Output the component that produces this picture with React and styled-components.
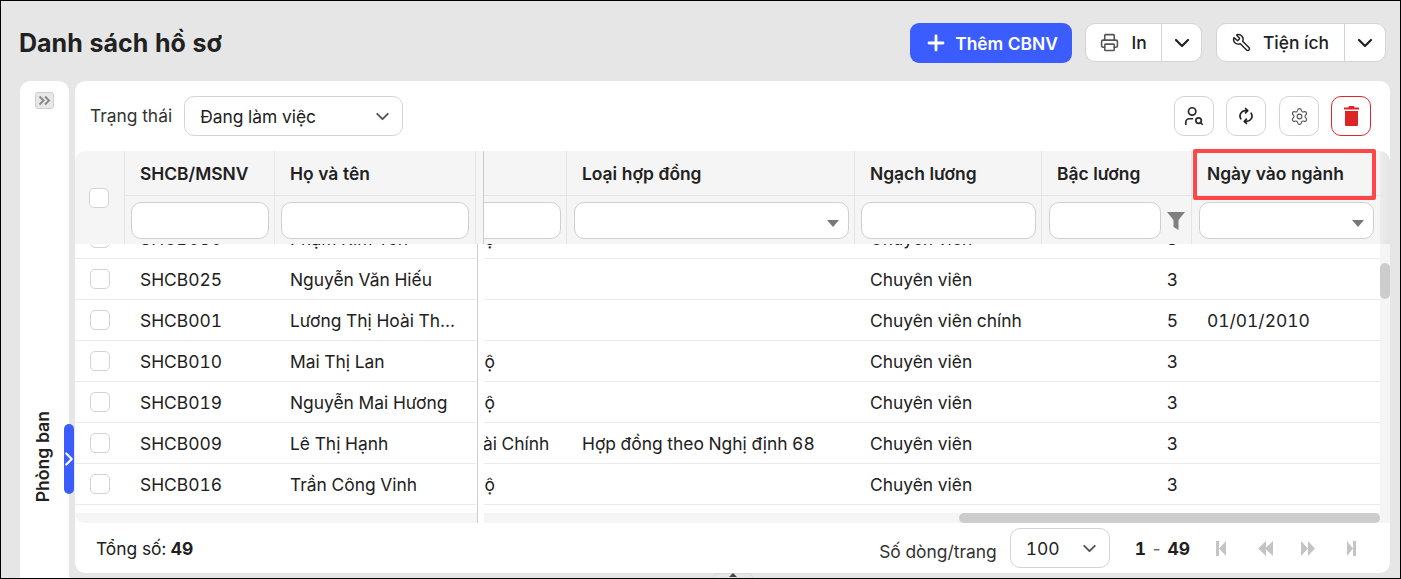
import styled, { createGlobalStyle } from "styled-components";
import { ChevronDown, ChevronRight, Plus, Printer, Settings, UserSearch, Wrench } from "lucide-react";

const GlobalStyle = createGlobalStyle`
  html, body { margin: 0; padding: 0; background: #e6e6e6; }
  * { box-sizing: border-box; }
`;

const COLS = { check: 50, code: 150, name: 201, gap: 8, dept: 83, contract: 288, grade: 187, level: 150, date: 188 };

const rows = [
  { code: "SHCB030", name: "Phạm Kim Yến", dept: "Bộ", grade: "Chuyên viên", level: 3 },
  { code: "SHCB025", name: "Nguyễn Văn Hiếu", grade: "Chuyên viên", level: 3 },
  { code: "SHCB001", name: "Lương Thị Hoài Thương", grade: "Chuyên viên chính", level: 5, date: "01/01/2010" },
  { code: "SHCB010", name: "Mai Thị Lan", dept: "Bộ", grade: "Chuyên viên", level: 3 },
  { code: "SHCB019", name: "Nguyễn Mai Hương", dept: "Bộ", grade: "Chuyên viên", level: 3 },
  { code: "SHCB009", name: "Lê Thị Hạnh", dept: "Tài Chính", contract: "Hợp đồng theo Nghị định 68", grade: "Chuyên viên", level: 3 },
  { code: "SHCB016", name: "Trần Công Vinh", dept: "Bộ", grade: "Chuyên viên", level: 3 },
];

const Page = styled.div`
  position: relative;
  width: 1401px;
  height: 579px;
  border: 1px solid #000;
  background: #e6e6e6;
  overflow: hidden;
  font-family: Inter, "Noto Sans", sans-serif;
  font-size: 17.4px;
  font-variant-numeric: tabular-nums;
  color: #212121;
`;
const TopBar = styled.header`
  display: flex;
  align-items: center;
  justify-content: space-between;
  height: 40px;
  margin: 22px 14px 18px 18px;
`;
const Title = styled.h1`
  margin: 0;
  font-size: 25px;
  font-weight: 700;
`;
const Actions = styled.div`
  display: flex;
  gap: 13px;
  & > :last-child { margin-left: 1px; }
`;
const PrimaryButton = styled.button`
  display: flex;
  align-items: center;
  justify-content: center;
  gap: 7px;
  width: 162px;
  height: 40px;
  border: 0;
  border-radius: 9px;
  background: #3b5cff;
  color: #fff;
  font: 600 17.4px Inter, sans-serif;
`;
const SplitButton = styled.div`
  display: flex;
  height: 39px;
  border: 1px solid #d4d4d4;
  border-radius: 10px;
  background: #fff;
  font-weight: 500;
`;
const SplitMain = styled.div`
  display: flex;
  align-items: center;
  justify-content: center;
  gap: 12px;
  width: ${(p) => p.$width}px;
  border-right: 1px solid #d4d4d4;
`;
const SplitArrow = styled.div`
  display: flex;
  align-items: center;
  justify-content: center;
  width: ${(p) => p.$width}px;
`;
const MirroredWrench = styled(Wrench)`
  transform: scaleX(-1);
`;
const Content = styled.div`
  display: flex;
  gap: 6px;
  margin-left: 19px;
`;
const Sidebar = styled.aside`
  position: relative;
  display: flex;
  flex-direction: column;
  align-items: center;
  width: 49px;
  height: 498px;
  padding-top: 11px;
  border-radius: 10px 10px 0 0;
  background: #fff;
`;
const CollapseButton = styled.div`
  display: flex;
  align-items: center;
  justify-content: center;
  width: 19px;
  height: 17px;
  border: 1px solid #cfcfcf;
  border-radius: 3px;
  background: #e8e8e8;
`;
const SidebarLabel = styled.div`
  margin-top: auto;
  margin-bottom: 77px;
  margin-right: 5px;
  writing-mode: vertical-rl;
  transform: rotate(180deg);
  font-size: 17.6px;
  font-weight: 600;
`;
const SidebarTab = styled.div`
  position: absolute;
  top: 343px;
  right: -5px;
  display: flex;
  align-items: center;
  justify-content: center;
  width: 10px;
  height: 70px;
  border-radius: 5px;
  background: #3b5cff;
  color: #fff;
  & svg { flex: none; }
`;
const Card = styled.main`
  display: flex;
  flex-direction: column;
  width: 1315px;
  height: 492px;
  border-radius: 10px;
  background: #fff;
`;
const Toolbar = styled.div`
  display: flex;
  align-items: center;
  height: 70px;
  padding: 0 19px 0 15px;
`;
const FieldLabel = styled.span`
  margin: -2px 12px 0 0;
  color: #333;
`;
const SelectBox = styled.div`
  display: flex;
  align-items: center;
  justify-content: space-between;
  width: ${(p) => p.$width}px;
  height: 40px;
  padding: 0 9px 0 15px;
  border: 1px solid #d4d4d4;
  border-radius: 10px;
  background: #fff;
`;
const ToolGroup = styled.div`
  display: flex;
  gap: 12px;
  margin-left: auto;
  & > :nth-child(2) { margin-right: 1px; }
`;
const ToolButton = styled.div`
  display: flex;
  align-items: center;
  justify-content: center;
  width: 40px;
  height: 40px;
  border: 1px solid ${(p) => (p.$danger ? "#e0262a" : "#d4d4d4")};
  border-radius: 10px;
  background: #fff;
  color: ${(p) => (p.$danger ? "#dc2626" : "#2b2b2b")};
`;
const Table = styled.div`
  position: relative;
  display: flex;
  flex-direction: column;
  flex: 1;
`;
const Head = styled.div`
  display: flex;
  height: 93px;
  border-radius: 10px 10px 0 0;
  background: #f5f5f5;
`;
const HeadCheck = styled.div`
  display: flex;
  align-items: center;
  justify-content: center;
  width: ${COLS.check}px;
  padding-right: 1px;
  border-right: 1px solid #e5e5e5;
`;
const HeadColumn = styled.div`
  display: flex;
  flex-direction: column;
  flex: none;
  width: ${(p) => p.$width}px;
  overflow: hidden;
  border-right: ${(p) => (p.$last ? "0" : "1px solid #e5e5e5")};
`;
const HeadTitle = styled.div`
  display: flex;
  align-items: center;
  flex: none;
  height: 45px;
  padding-left: 15px;
  border-bottom: 1px solid #e5e5e5;
  font-weight: 600;
  white-space: nowrap;
`;
const HeadFilter = styled.div`
  display: flex;
  align-items: center;
  gap: 6px;
  padding: 6px ${(p) => p.$right ?? 5}px 0 ${(p) => p.$left ?? 6}px;
`;
const FilterBox = styled.div`
  display: flex;
  align-items: flex-end;
  justify-content: flex-end;
  flex: ${(p) => (p.$fixed ? "none" : 1)};
  width: ${(p) => (p.$fixed ? `${p.$fixed}px` : "auto")};
  height: 37px;
  margin-left: ${(p) => p.$pull ?? 0}px;
  padding: 0 9px 11px 0;
  border: 1px solid #cfcfcf;
  border-radius: 10px;
  background: #fff;
`;
const Caret = styled.span`
  width: 0;
  height: 0;
  border-left: 6.5px solid transparent;
  border-right: 6.5px solid transparent;
  border-top: 7px solid #777;
`;
const HeadDivider = styled.div`
  flex: none;
  width: ${COLS.gap}px;
  border-right: 1px solid #ccc;
`;
const ScrollCorner = styled.div`
  flex: 1;
  border-top-right-radius: 10px;
  background: linear-gradient(to right, #ececec, #e4e4e4);
`;
const BodyWrap = styled.div`
  display: flex;
  height: 269px;
`;
const Viewport = styled.div`
  width: 1305px;
  overflow: hidden;
`;
const RowList = styled.div`
  margin-top: -26px;
`;
const Row = styled.div`
  display: flex;
  height: 41px;
`;
const Cell = styled.div`
  display: flex;
  align-items: center;
  justify-content: ${(p) => (p.$end ? "flex-end" : "flex-start")};
  flex: none;
  width: ${(p) => p.$width}px;
  padding: 0 ${(p) => p.$right ?? 0}px 0 ${(p) => p.$left ?? 15}px;
  overflow: hidden;
  border-bottom: 1px solid ${(p) => (p.$blank ? "transparent" : "#ebebeb")};
  white-space: nowrap;
`;
const Clip = styled.span`
  overflow: hidden;
  text-overflow: ellipsis;
`;
const ScrolledText = styled.span`
  margin-left: -11px;
`;
const RowDivider = styled.div`
  flex: none;
  width: ${COLS.gap}px;
  background: linear-gradient(to right, #fff 1px, #ccc 1px, #ccc 2px, #fff 2px);
`;
const Checkbox = styled.div`
  flex: none;
  width: 20px;
  height: 20px;
  border: 1px solid #d4d4d4;
  border-radius: 5px;
  background: #fff;
`;
const VScroll = styled.div`
  flex: 1;
  padding-top: 19px;
  background: #f5f5f5;
`;
const VThumb = styled.div`
  width: 100%;
  height: 36px;
  border-radius: 5px;
  background: #ccc;
`;
const HScroll = styled.div`
  display: flex;
  height: 10px;
  background: #fff;
`;
const HFrozen = styled.div`
  flex: none;
  width: 403px;
  border-right: 1px solid #ccc;
  border-bottom-left-radius: 10px;
  background: #f5f5f5;
`;
const HTrack = styled.div`
  flex: none;
  width: 906px;
  margin-left: 6px;
  padding-left: 475px;
  background: #f5f5f5;
`;
const HThumb = styled.div`
  width: 421px;
  height: 100%;
  border-radius: 5px;
  background: #ccc;
`;
const Highlight = styled.div`
  position: absolute;
  top: -2px;
  left: 1118px;
  width: 183px;
  height: 51px;
  border: 4px solid #ff474a;
  border-radius: 2px;
  pointer-events: none;
`;
const Footer = styled.footer`
  display: flex;
  align-items: center;
  flex: 1;
  padding: 0 34px 0 21px;
`;
const FooterRight = styled.div`
  display: flex;
  align-items: center;
  margin-left: auto;
`;
const PerPage = styled.span`
  margin: 6px 13px 0 0;
  color: #333;
`;
const Range = styled.span`
  margin: 0 26px 0 25px;
  font-weight: 700;
  word-spacing: 0.5px;
  & i { font-style: normal; font-weight: 400; color: #666; }
`;
const Pager = styled.div`
  display: flex;
  align-items: center;
  gap: 28px;
  color: #c4c4c4;
`;
const PagerPair = styled.div`
  display: flex;
  align-items: center;
  gap: 32px;
`;
const ResizeHandle = styled.div`
  position: absolute;
  left: 712px;
  bottom: 0;
  display: flex;
  justify-content: center;
  width: 40px;
  height: 5px;
  border: 1px solid #d9d9d9;
  border-bottom: 0;
  border-radius: 5px 5px 0 0;
  background: #e6e6e6;
`;
const HandleArrow = styled.span`
  width: 0;
  height: 0;
  margin-top: -1px;
  border-left: 4px solid transparent;
  border-right: 4px solid transparent;
  border-bottom: 4px solid #444;
`;

const DoubleChevron = () => (
  <svg width="13" height="11" viewBox="0 0 13 11" fill="none" stroke="#8a8a8a" strokeWidth="2">
    <path d="M1.5 1.5 5.5 5.5 1.5 9.500M7 1.5 11 5.5 7 9.500" />
  </svg>
);

const SyncIcon = () => (
  <svg width="16" height="18" viewBox="0 0 18 20" fill="none" stroke="#1f1f1f" strokeWidth="1.8" strokeLinecap="round" strokeLinejoin="round">
    <path d="M3.2 13.2A6 6 0 0 1 9 4h1.5M8.5 1.5 11 4 8.5 6.5" />
    <path d="M14.8 6.8A6 6 0 0 1 9 16H7.5M9.5 13.5 7 16l2.5 2.5" />
  </svg>
);

const TrashIcon = () => (
  <svg width="15" height="20" viewBox="0 0 15 20" fill="currentColor">
    <path d="M5 0h5l.5 1.5H15v2H0v-2h4.5zM1 5h13v14a1 1 0 0 1-1 1H2a1 1 0 0 1-1-1z" />
  </svg>
);

const FunnelIcon = () => (
  <svg width="18" height="18" viewBox="0 0 18 18" fill="#808080">
    <path d="M0 0h18l-6.5 8v10l-5-3V8z" />
  </svg>
);

const PagerIcon = ({ d, width }) => (
  <svg width={width} height="15" viewBox={`0 0 ${width} 15`} fill="currentColor">
    <path d={d} />
  </svg>
);

const FilterCell = ({ width, title, caret, left, right }) => (
  <HeadColumn $width={width}>
    <HeadTitle>{title}</HeadTitle>
    <HeadFilter $left={left} $right={right}>
      <FilterBox>{caret && <Caret />}</FilterBox>
    </HeadFilter>
  </HeadColumn>
);

const App = () => {
  return (
    <>
      <GlobalStyle />
      <Page>
        <TopBar>
          <Title>Danh sách hồ sơ</Title>
          <Actions>
            <PrimaryButton>
              <Plus size={24} strokeWidth={2.8} />
              Thêm CBNV
            </PrimaryButton>
            <SplitButton>
              <SplitMain $width={76}>
                <Printer size={19} color="#555" />
                In
              </SplitMain>
              <SplitArrow $width={39}>
                <ChevronDown size={24} strokeWidth={2.2} />
              </SplitArrow>
            </SplitButton>
            <SplitButton>
              <SplitMain $width={128}>
                <MirroredWrench size={19} strokeWidth={1.8} />
                Tiện ích
              </SplitMain>
              <SplitArrow $width={40}>
                <ChevronDown size={24} strokeWidth={2.2} />
              </SplitArrow>
            </SplitButton>
          </Actions>
        </TopBar>

        <Content>
          <Sidebar>
            <CollapseButton>
              <DoubleChevron />
            </CollapseButton>
            <SidebarLabel>Phòng ban</SidebarLabel>
            <SidebarTab>
              <ChevronRight size={22} strokeWidth={2.4} />
            </SidebarTab>
          </Sidebar>

          <Card>
            <Toolbar>
              <FieldLabel>Trạng thái</FieldLabel>
              <SelectBox $width={219}>
                Đang làm việc
                <ChevronDown size={21} strokeWidth={2.2} color="#555" />
              </SelectBox>
              <ToolGroup>
                <ToolButton>
                  <UserSearch size={22} strokeWidth={1.9} />
                </ToolButton>
                <ToolButton>
                  <SyncIcon />
                </ToolButton>
                <ToolButton>
                  <Settings size={19} strokeWidth={1.4} color="#555" />
                </ToolButton>
                <ToolButton $danger>
                  <TrashIcon />
                </ToolButton>
              </ToolGroup>
            </Toolbar>

            <Table>
              <Head>
                <HeadCheck>
                  <Checkbox />
                </HeadCheck>
                <FilterCell width={COLS.code} title="SHCB/MSNV" />
                <FilterCell width={COLS.name} title="Họ và tên" right={6} />
                <HeadDivider />
                <HeadColumn $width={COLS.dept}>
                  <HeadTitle />
                  <HeadFilter $left={0}>
                    <FilterBox $fixed={97} $pull={-20} />
                  </HeadFilter>
                </HeadColumn>
                <FilterCell width={COLS.contract} title="Loại hợp đồng" caret left={7} />
                <FilterCell width={COLS.grade} title="Ngạch lương" />
                <HeadColumn $width={COLS.level}>
                  <HeadTitle>Bậc lương</HeadTitle>
                  <HeadFilter $left={7}>
                    <FilterBox $fixed={112} />
                    <FunnelIcon />
                  </HeadFilter>
                </HeadColumn>
                <HeadColumn $width={COLS.date} $last>
                  <HeadTitle>Ngày vào ngành</HeadTitle>
                  <HeadFilter $left={7} $right={6}>
                    <FilterBox $fixed={175}>
                      <Caret />
                    </FilterBox>
                  </HeadFilter>
                </HeadColumn>
                <ScrollCorner />
              </Head>

              <BodyWrap>
                <Viewport>
                  <RowList>
                    {rows.map((row) => (
                      <Row key={row.code}>
                        <Cell $width={COLS.check} $left={15}>
                          <Checkbox />
                        </Cell>
                        <Cell $width={COLS.code}>{row.code}</Cell>
                        <Cell $width={COLS.name} $right={16}>
                          <Clip>{row.name}</Clip>
                        </Cell>
                        <RowDivider />
                        <Cell $width={COLS.dept} $left={0}>
                          {row.dept && <ScrolledText>{row.dept}</ScrolledText>}
                        </Cell>
                        <Cell $width={COLS.contract}>{row.contract}</Cell>
                        <Cell $width={COLS.grade}>{row.grade}</Cell>
                        <Cell $width={COLS.level} $end $right={14}>
                          {row.level}
                        </Cell>
                        <Cell $width={COLS.date}>{row.date}</Cell>
                      </Row>
                    ))}
                    <Row>
                      <Cell $width={COLS.check + COLS.code + COLS.name} $blank />
                      <RowDivider />
                    </Row>
                  </RowList>
                </Viewport>
                <VScroll>
                  <VThumb />
                </VScroll>
              </BodyWrap>

              <HScroll>
                <HFrozen />
                <HTrack>
                  <HThumb />
                </HTrack>
              </HScroll>

              <Highlight />

              <Footer>
                <span>
                  Tổng số: <b>49</b>
                </span>
                <FooterRight>
                  <PerPage>Số dòng/trang</PerPage>
                  <SelectBox $width={100}>
                    100
                    <ChevronDown size={21} strokeWidth={2.2} color="#555" />
                  </SelectBox>
                  <Range>
                    1 <i>-</i> 49
                  </Range>
                  <Pager>
                    <PagerPair>
                      <PagerIcon width={10} d="M0 0h3v15H0zM10 0v15L3 7.5z" />
                      <PagerIcon width={15} d="M8 0v15L0 7.5zM15 0v15L7 7.5z" />
                    </PagerPair>
                    <PagerPair>
                      <PagerIcon width={14} d="M0 0l7 7.500L0 15zM7 0l7 7.500L7 15z" />
                      <PagerIcon width={9} d="M0 0l6 7.500L0 15zM6 0h3v15H6z" />
                    </PagerPair>
                  </Pager>
                </FooterRight>
              </Footer>
            </Table>
          </Card>
        </Content>
        <ResizeHandle>
          <HandleArrow />
        </ResizeHandle>
      </Page>
    </>
  );
};

export default App;
